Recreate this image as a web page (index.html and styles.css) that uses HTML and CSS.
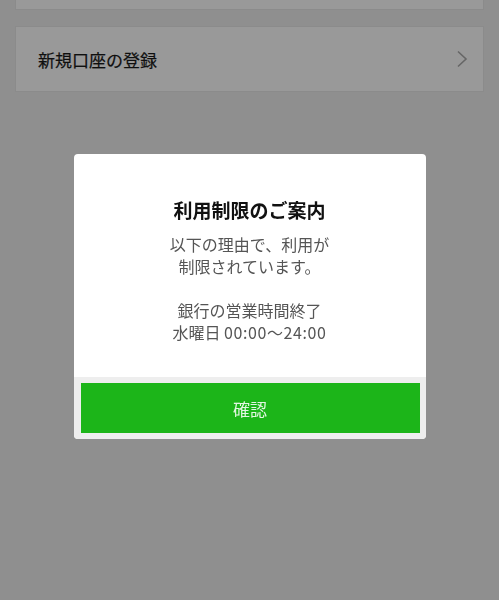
FILE: index.html
```html
<!DOCTYPE html>
<html lang="ja">
<head>
    <meta charset="UTF-8">
    <meta name="viewport" content="width=device-width, initial-scale=1.0">
    <title>利用制限のご案内</title>
    <link rel="stylesheet" href="styles.css">
</head>
<body>
    <div class="menu">
        <div class="card card-top"></div>
        <div class="card">
            <span class="card-label">新規口座の登録</span>
            <svg class="chevron" width="12" height="18" viewBox="0 0 12 18">
                <polyline points="2,1.5 10,9 2,16.5" fill="none" stroke="#aaaaaa" stroke-width="1.6"/>
            </svg>
        </div>
    </div>

    <div class="overlay">
        <div class="dialog">
            <div class="dialog-body">
                <h2 class="dialog-title">利用制限のご案内</h2>
                <p class="dialog-text">以下の理由で、利用が<br>制限されています。<br><br>銀行の営業時間終了<br>水曜日 <span class="time">00:00～24:00</span></p>
            </div>
            <div class="dialog-footer">
                <button class="confirm">確認</button>
            </div>
        </div>
    </div>
</body>
</html>
```

FILE: styles.css
```css
body {
    margin: 0;
    height: 600px;
    overflow: hidden;
    background-color: #eeeeee;
    font-family: "Noto Sans CJK JP", "Noto Sans", sans-serif;
}

.menu {
    display: flex;
    flex-direction: column;
    gap: 16px;
    padding: 0 15px;
    margin-top: -56px;
}

.card {
    display: flex;
    align-items: center;
    justify-content: space-between;
    height: 64px;
    padding: 0 15px 0 22px;
    background-color: #ffffff;
    border: 1px solid #e8e8e8;
}

.card-label {
    font-size: 17px;
    color: #1a1a1a;
    -webkit-text-stroke: 0.2px #1a1a1a;
}

.chevron {
    display: block;
}

.overlay {
    position: fixed;
    inset: 0;
    display: flex;
    align-items: center;
    justify-content: center;
    padding-bottom: 7px;
    background-color: rgba(0, 0, 0, 0.4);
}

.dialog {
    width: 352px;
    background-color: #ffffff;
    border-radius: 4px;
    overflow: hidden;
}

.dialog-body {
    padding: 44px 20px 34px;
    text-align: center;
}

.dialog-title {
    margin: 0 0 11px;
    font-size: 19px;
    line-height: 24px;
    font-weight: bold;
    color: #111111;
}

.dialog-text {
    margin: 0;
    font-size: 16px;
    line-height: 22px;
    color: #555555;
}

.time {
    letter-spacing: 0.6px;
}

.dialog-footer {
    padding: 6px 6px 6px 7px;
    background-color: #eeeeee;
}

.confirm {
    display: block;
    width: 100%;
    height: 50px;
    border: none;
    background-color: #1cb519;
    color: #e3f6e2;
    font-family: inherit;
    font-size: 17px;
    cursor: pointer;
}
```
